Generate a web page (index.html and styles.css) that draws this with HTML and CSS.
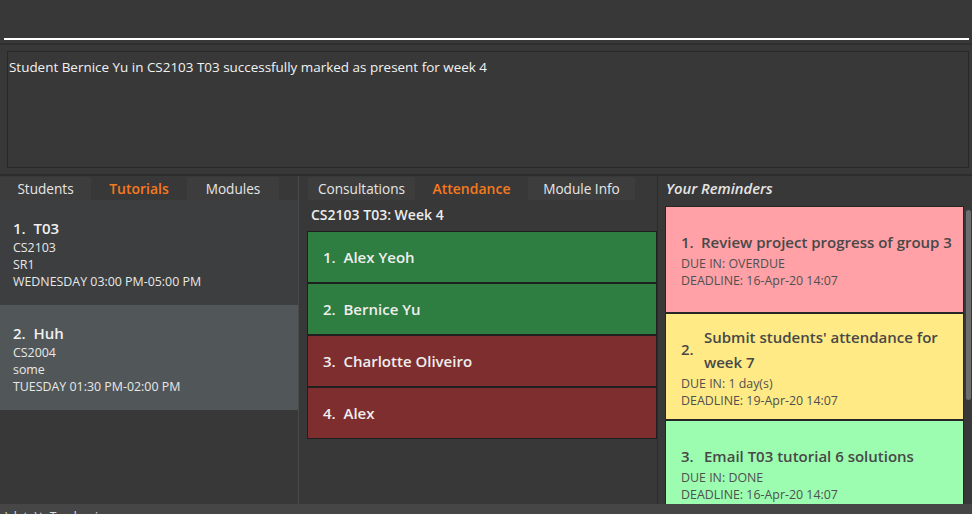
FILE: index.html
```html
<!DOCTYPE html>
<html>
<head>
<meta charset="utf-8">
<link rel="stylesheet" href="styles.css">
</head>
<body>
<div class="app">
  <div class="command"><div class="command-input"></div></div>
  <div class="result-wrap">
    <div class="result">Student Bernice Yu in CS2103 T03 successfully marked as present for week 4</div>
  </div>
  <div class="main">
    <section class="panel left">
      <div class="tabs">
        <span class="tab t-students">Students</span>
        <span class="tab active t-tutorials">Tutorials</span>
        <span class="tab t-modules">Modules</span>
      </div>
      <div class="tlist">
        <div class="tcard">
          <div class="tcard-title">1.&nbsp; T03</div>
          <div class="tcard-line">CS2103</div>
          <div class="tcard-line">SR1</div>
          <div class="tcard-line">WEDNESDAY 03:00 PM-05:00 PM</div>
        </div>
        <div class="tcard selected">
          <div class="tcard-title">2.&nbsp; Huh</div>
          <div class="tcard-line">CS2004</div>
          <div class="tcard-line">some</div>
          <div class="tcard-line">TUESDAY 01:30 PM-02:00 PM</div>
        </div>
      </div>
    </section>
    <section class="panel mid">
      <div class="tabs mid-tabs">
        <span class="tab t-consult">Consultations</span>
        <span class="tab active t-attend">Attendance</span>
        <span class="tab t-info">Module Info</span>
      </div>
      <div class="week-title">CS2103 T03: Week 4</div>
      <div class="alist">
        <div class="acard present">1.&nbsp; Alex Yeoh</div>
        <div class="acard present">2.&nbsp; Bernice Yu</div>
        <div class="acard absent">3.&nbsp; Charlotte Oliveiro</div>
        <div class="acard absent">4.&nbsp; Alex</div>
      </div>
    </section>
    <section class="panel right">
      <div class="rem-title">Your Reminders</div>
      <div class="rem-body">
        <div class="rlist">
          <div class="rcard overdue">
            <div class="rcard-head"><span class="rnum">1.</span><span class="rtext">Review project progress of group 3</span></div>
            <div class="rline">DUE IN: OVERDUE</div>
            <div class="rline">DEADLINE: 16-Apr-20 14:07</div>
          </div>
          <div class="rcard soon">
            <div class="rcard-head"><span class="rnum">2.</span><span class="rtext">Submit students' attendance for week 7</span></div>
            <div class="rline">DUE IN: 1 day(s)</div>
            <div class="rline">DEADLINE: 19-Apr-20 14:07</div>
          </div>
          <div class="rcard done">
            <div class="rcard-head"><span class="rnum">3.</span><span class="rtext">Email T03 tutorial 6 solutions</span></div>
            <div class="rline">DUE IN: DONE</div>
            <div class="rline">DEADLINE: 16-Apr-20 14:07</div>
          </div>
        </div>
        <div class="scroll-track"><div class="scroll-thumb"></div></div>
      </div>
    </section>
  </div>
  <div class="status"><span class="status-text">.\data\taTracker.json</span></div>
</div>
</body>
</html>
```

FILE: styles.css
```css
* { box-sizing: border-box; }
html, body {
  margin: 0;
  padding: 0;
  width: 972px;
  height: 514px;
  overflow: hidden;
  background: #383838;
  font-family: "Open Sans", "Noto Sans", sans-serif;
  color: #fff;
}
.app {
  display: flex;
  flex-direction: column;
  height: 514px;
}
.command {
  height: 45px;
  padding: 0 3px 0 4px;
  border-bottom: 2px solid #2f2f2f;
}
.command-input {
  height: 40px;
  border-bottom: 2px solid #ffffff;
}
.result-wrap {
  padding: 6px 3px 6px 7px;
  border-bottom: 2px solid #2c2c2c;
}
.result {
  height: 117px;
  border: 1px solid #282828;
  padding: 5px 0 0 1px;
  font-size: 13.45px;
  line-height: 20px;
  color: #f2f2f2;
}
.main {
  display: flex;
  height: 328px;
}
.panel {
  display: flex;
  flex-direction: column;
  overflow: hidden;
}
.left {
  width: 299px;
  border-right: 1px solid #4a4a4a;
}
.mid {
  width: 359px;
  border-right: 1px solid #2c2c2c;
  padding-left: 8px;
}
.right {
  flex: 1;
  padding-left: 7px;
}
.tabs {
  display: flex;
  height: 24px;
  padding-top: 1px;
}
.tab {
  display: flex;
  align-items: center;
  justify-content: center;
  font-size: 13.6px;
  color: #e6e6e6;
  background: #3d3d3d;
}
.tab.active {
  background: transparent;
  color: #f57a1f;
  font-weight: 600;
  font-size: 14px;
}
.t-students { width: 91px; }
.t-tutorials { width: 96px; }
.t-modules { width: 92px; }
.mid-tabs { padding-left: 1px; }
.t-consult { width: 107px; }
.t-attend { width: 113px; }
.t-info { width: 107px; }
.tlist {
  display: flex;
  flex-direction: column;
}
.tcard {
  height: 105px;
  background: #3c3e3f;
  padding: 17px 0 0 13px;
}
.tcard.selected { background: #515658; }
.tcard-title {
  font-size: 15px;
  font-weight: 600;
  line-height: 22px;
  color: #f0f0f0;
}
.tcard-line {
  font-size: 12.4px;
  line-height: 17px;
  color: #e8e8e8;
}
.week-title {
  font-size: 14px;
  font-weight: 600;
  line-height: 20px;
  height: 31px;
  padding: 5px 0 0 4px;
  color: #ececec;
}
.alist {
  display: flex;
  flex-direction: column;
  width: 350px;
}
.acard {
  height: 52px;
  border: 1px solid #1f1f1f;
  display: flex;
  align-items: center;
  padding-left: 15px;
  font-size: 15px;
  font-weight: 600;
  color: #eeeeee;
}
.acard.present { background: #2e7d41; }
.acard.absent { background: #7f2e30; }
.rem-title {
  height: 30px;
  line-height: 24px;
  padding-left: 1px;
  font-size: 14.8px;
  font-weight: 600;
  font-style: italic;
  color: #e4e4e4;
}
.rem-body {
  display: flex;
  flex: 1;
  overflow: hidden;
}
.rlist {
  width: 300px;
  display: flex;
  flex-direction: column;
}
.rcard {
  flex: none;
  height: 107px;
  border: 1px solid #262626;
  display: flex;
  flex-direction: column;
  justify-content: center;
  padding: 0 6px 0 15px;
  color: #484848;
}
.rcard.overdue { background: #ffa1a6; }
.rcard.soon { background: #ffea85; }
.rcard.done { background: #9cfcb0; }
.rcard-head {
  display: flex;
  align-items: center;
  font-size: 15px;
  font-weight: 600;
  line-height: 25px;
}
.rnum {
  flex: none;
  width: 23px;
}
.overdue .rnum { width: 20px; }
.rtext { flex: 1; }
.rline {
  font-size: 12.4px;
  line-height: 17px;
  color: #505050;
}
.scroll-track {
  width: 8px;
  padding: 4px 1px 0 2px;
}
.scroll-thumb {
  height: 190px;
  background: #6d6d6d;
  border-radius: 3px;
}
.status {
  height: 10px;
  background: #464646;
  overflow: hidden;
  padding: 6px 0 0 2px;
  font-size: 12px;
  line-height: 14px;
  color: #e0e0e0;
}
```
